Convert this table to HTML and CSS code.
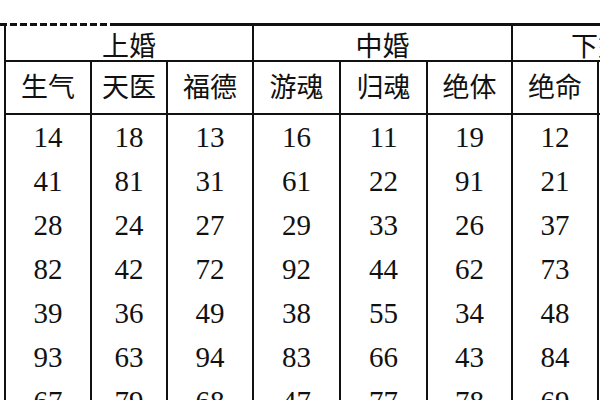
FILE: index.html
```html
<!DOCTYPE html>
<html lang="zh">
<head>
<meta charset="utf-8">
<title>婚配表</title>
<link rel="stylesheet" href="styles.css">
</head>
<body>
<div class="page">
  <div class="topline"><span class="dash"></span><span class="solid"></span></div>
  <table class="grid">
    <colgroup>
      <col class="w86"><col class="w76"><col class="w86"><col class="w87"><col class="w87"><col class="w85"><col class="w86"><col class="w86">
    </colgroup>
    <tr class="h1">
      <th colspan="3">上婚</th>
      <th colspan="3">中婚</th>
      <th colspan="2">下婚</th>
    </tr>
    <tr class="h2">
      <th>生气</th><th>天医</th><th>福德</th><th>游魂</th><th>归魂</th><th>绝体</th><th>绝命</th><th></th>
    </tr>
    <tr class="d"><td>14</td><td>18</td><td>13</td><td>16</td><td>11</td><td>19</td><td>12</td><td></td></tr>
    <tr class="d"><td>41</td><td>81</td><td>31</td><td>61</td><td>22</td><td>91</td><td>21</td><td></td></tr>
    <tr class="d"><td>28</td><td>24</td><td>27</td><td>29</td><td>33</td><td>26</td><td>37</td><td></td></tr>
    <tr class="d"><td>82</td><td>42</td><td>72</td><td>92</td><td>44</td><td>62</td><td>73</td><td></td></tr>
    <tr class="d"><td>39</td><td>36</td><td>49</td><td>38</td><td>55</td><td>34</td><td>48</td><td></td></tr>
    <tr class="d"><td>93</td><td>63</td><td>94</td><td>83</td><td>66</td><td>43</td><td>84</td><td></td></tr>
    <tr class="d"><td>67</td><td>79</td><td>68</td><td>47</td><td>77</td><td>78</td><td>69</td><td></td></tr>
  </table>
</div>
</body>
</html>
```
FILE: styles.css
```css
html, body {
  margin: 0;
  padding: 0;
  background: #ffffff;
  overflow: hidden;
}
body {
  width: 600px;
  height: 400px;
  font-family: "Noto Sans CJK SC", sans-serif;
  color: #111;
}
.page {
  padding-top: 23px;
  width: 720px;
}
.topline {
  display: flex;
  height: 3px;
}
.topline .dash {
  width: 115px;
  background: repeating-linear-gradient(90deg, #111 0 7px, transparent 7px 10px);
}
.topline .solid {
  flex: 1;
  background: #111;
}
.grid {
  margin-left: 4px;
  border-collapse: collapse;
  table-layout: fixed;
  width: 679px;
}
.w86 { width: 86px; }
.w76 { width: 76px; }
.w87 { width: 87px; }
.w85 { width: 85px; }
.grid th, .grid td {
  border-left: 2px solid #111;
  border-right: 2px solid #111;
  padding: 0;
  text-align: center;
  white-space: nowrap;
}
.grid th {
  font-weight: 400;
  font-size: 27px;
}
.h1 th {
  height: 31px;
  line-height: 31px;
  padding-top: 3px;
  vertical-align: top;
  border-bottom: 2px solid #111;
}
.h2 th {
  height: 47px;
  line-height: 47px;
  padding-bottom: 4px;
  vertical-align: top;
  border-bottom: 2px solid #111;
}
.d td {
  height: 44px;
  vertical-align: middle;
  font-family: "Liberation Serif", serif;
  font-size: 29px;
  line-height: 29px;
}
```
